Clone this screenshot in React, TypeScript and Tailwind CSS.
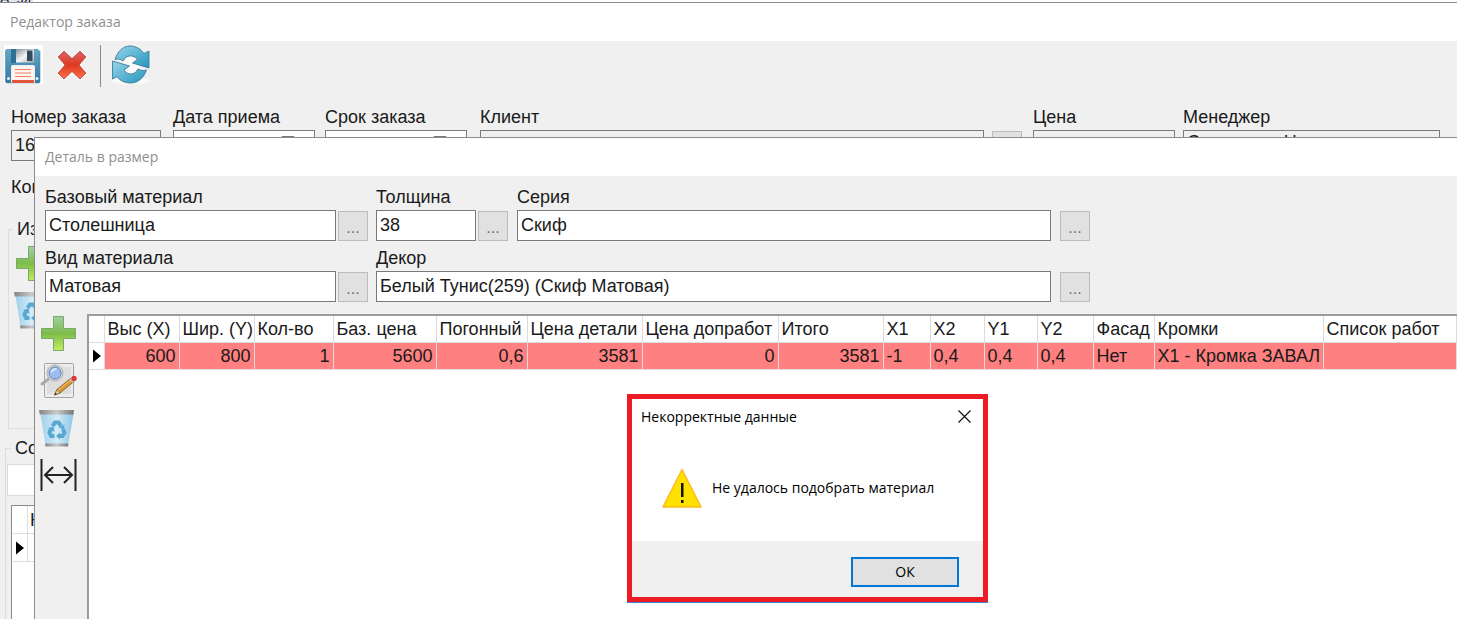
import type { ReactNode } from "react";

const columns = [
  { title: "Выс (X)", value: "600", width: "w-[75px]", right: true },
  { title: "Шир. (Y)", value: "800", width: "w-[75px]", right: true },
  { title: "Кол-во", value: "1", width: "w-[79px]", right: true },
  { title: "Баз. цена", value: "5600", width: "w-[103px]", right: true },
  { title: "Погонный", value: "0,6", width: "w-[91px]", right: true },
  { title: "Цена детали", value: "3581", width: "w-[115px]", right: true },
  { title: "Цена допработ", value: "0", width: "w-[136px]", right: true },
  { title: "Итого", value: "3581", width: "w-[105px]", right: true },
  { title: "X1", value: "-1", width: "w-[47px]", right: false },
  { title: "X2", value: "0,4", width: "w-[54px]", right: false },
  { title: "Y1", value: "0,4", width: "w-[53px]", right: false },
  { title: "Y2", value: "0,4", width: "w-[56px]", right: false },
  { title: "Фасад", value: "Нет", width: "w-[61px]", right: false },
  { title: "Кромки", value: "X1 - Кромка ЗАВАЛ", width: "w-[169px]", right: false },
  { title: "Список работ", value: "", width: "", right: false },
];

function SaveIcon() {
  return (
    <svg width="39" height="39" viewBox="0 0 39 39">
      <defs>
        <linearGradient id="saveBody" x1="0" y1="0" x2="0" y2="1">
          <stop offset="0" stopColor="#62a5c6" />
          <stop offset="1" stopColor="#36789f" />
        </linearGradient>
        <linearGradient id="saveShutter" x1="0" y1="0" x2="1" y2="1">
          <stop offset="0" stopColor="#8e959a" />
          <stop offset="0.5" stopColor="#f4f5f6" />
          <stop offset="1" stopColor="#a5abb0" />
        </linearGradient>
      </defs>
      <rect width="39" height="39" fill="#fff" />
      <path d="M1.500 6 q0-1.500 1.500-1.500 h31 l2 2 v30 q0 1.500-1.500 1.500 h-31.500 q-1.500 0-1.500-1.500z" fill="url(#saveBody)" stroke="#4b88aa" strokeWidth="0.600" />
      <rect x="7" y="4" width="5" height="14" fill="#2f6e95" />
      <rect x="12" y="4.500" width="18" height="13" fill="url(#saveShutter)" />
      <rect x="23" y="5.500" width="5.500" height="10.500" fill="#34495a" />
      <rect x="7.500" y="20.500" width="23" height="17.500" rx="1" fill="#fdf3ef" stroke="#e8eef2" />
      <rect x="8" y="35" width="22" height="3" fill="#e4553a" />
      <path d="M11 24.500 h16 M11 28 h16 M11 31.500 h16" stroke="#ee8064" strokeWidth="1.200" />
      <circle cx="4.500" cy="33.500" r="1.500" fill="#e6f2f8" />
      <circle cx="33" cy="33.500" r="1.500" fill="#e6f2f8" />
    </svg>
  );
}

function CrossIcon() {
  return (
    <svg width="34" height="34" viewBox="0 0 34 34">
      <defs>
        <linearGradient id="cross" x1="0" y1="0" x2="0" y2="1">
          <stop offset="0" stopColor="#d9656a" />
          <stop offset="0.500" stopColor="#e03a20" />
          <stop offset="1" stopColor="#ff7049" />
        </linearGradient>
      </defs>
      <path
        d="M9 3 L17 10.500 L25 3 L31 9 L24 17 L31 25 L25 31 L17 23.500 L9 31 L3 25 L10 17 L3 9z"
        fill="url(#cross)"
        stroke="#fff"
        strokeWidth="3"
        strokeLinejoin="round"
      />
      <path
        d="M9 3 L17 10.500 L25 3 L31 9 L24 17 L31 25 L25 31 L17 23.500 L9 31 L3 25 L10 17 L3 9z"
        fill="url(#cross)"
        stroke="#a8483c"
        strokeWidth="0.800"
        strokeLinejoin="round"
      />
    </svg>
  );
}

function RefreshIcon() {
  return (
    <svg width="40" height="40" viewBox="0 0 40 40">
      <defs>
        <linearGradient id="refresh" x1="0" y1="0" x2="1" y2="1">
          <stop offset="0" stopColor="#9ad6ea" />
          <stop offset="1" stopColor="#2294bd" />
        </linearGradient>
      </defs>
      <ellipse cx="20" cy="36" rx="19" ry="3.500" fill="#fafafa" />
      <circle cx="20" cy="19.500" r="9" fill="#fafafa" />
      <g fill="url(#refresh)" stroke="#3b7f98" strokeWidth="0.900" strokeLinejoin="round">
        <path d="M4 14.500 C7 5 13 1 19 1 C25 1 30 4 33 8.500 L38 6 V23 L21.500 18 L26.500 14.500 C22 9 15 10 12 16 C9.500 14 7 13.500 4 14.500z" />
        <path d="M1.500 16 L18.500 21 L13 25 C17 31 24 30 27 24 C29.500 25.500 32 26 35.500 25 C32 35 25 38 20 38 C14 38 9 36 6 31.500 L1.500 34z" />
      </g>
    </svg>
  );
}

function PlusIcon() {
  return (
    <svg width="38" height="37" viewBox="-1 0 38 37">
      <defs>
        <linearGradient id="plus" x1="0" y1="0" x2="0" y2="1">
          <stop offset="0" stopColor="#a3cfa4" />
          <stop offset="0.500" stopColor="#7cbc4a" />
          <stop offset="1" stopColor="#c3ee62" />
        </linearGradient>
      </defs>
      <path
        d="M13.500 1.500 h10 v12 h12 v10 h-12 v12 h-10 v-12 h-12 v-10 h12z"
        fill="url(#plus)"
        stroke="#7aa86a"
        strokeWidth="1"
      />
    </svg>
  );
}

function EditIcon() {
  return (
    <svg width="38" height="37" viewBox="-1 0 38 37">
      <rect x="4.500" y="1.500" width="29" height="34" rx="1" fill="#ececec" stroke="#a4a4a4" />
      <rect x="7" y="5" width="24" height="27" fill="#dedede" />
      <path d="M2 22 L8 17.500" stroke="#a9a9a9" strokeWidth="3" strokeLinecap="round" />
      <circle cx="15" cy="11" r="8" fill="#d5d5d5" stroke="#b0b0b0" />
      <circle cx="15" cy="11" r="6" fill="#9dbdec" stroke="#5f83c2" />
      <path d="M11.500 10.500 q1-3.500 5-3.500" stroke="#dbe8fb" strokeWidth="2" fill="none" />
      <path d="M14.500 33 L17 27.500 L31 16 L34 19.500 L20 31z" fill="#d9982f" stroke="#7b5a22" strokeWidth="0.800" />
      <path d="M18 28.500 L32 17" stroke="#f4c875" strokeWidth="1" />
      <path d="M14.500 33 L17 27.500 L20 31z" fill="#e8cfa0" stroke="#6d5020" strokeWidth="0.600" />
      <path d="M14.500 33 l1-2.200 l1.200 1.300z" fill="#222" />
      <path d="M29.500 17.300 L31.500 15.700 L34.500 19 L32.500 20.700z" fill="#c4c4c4" />
      <circle cx="34" cy="16.500" r="2.700" fill="#dd3b36" />
    </svg>
  );
}

function BinIcon() {
  return (
    <svg width="37" height="39" viewBox="0 0 37 39">
      <defs>
        <linearGradient id="bin" x1="0" y1="0" x2="1" y2="0">
          <stop offset="0" stopColor="#9fd0ea" />
          <stop offset="0.500" stopColor="#d3ecf8" />
          <stop offset="1" stopColor="#8dc5e4" />
        </linearGradient>
        <linearGradient id="binRim" x1="0" y1="0" x2="1" y2="0">
          <stop offset="0" stopColor="#858585" />
          <stop offset="0.500" stopColor="#c9c9c9" />
          <stop offset="1" stopColor="#777" />
        </linearGradient>
      </defs>
      <path d="M1.500 5 H34.500 L29 36 H6.500z" fill="url(#bin)" />
      <path d="M0 1 H35 L34.500 5.500 H0.800z" fill="url(#binRim)" />
      <path d="M6 34.500 H29.500 L29 37.500 H6.500z" fill="url(#binRim)" />
      <g fill="none" stroke="#5aa7d2" strokeWidth="4">
        <path d="M13.500 17 L16 13.500 H19.500 L22 17" />
        <path d="M24 20 L25.500 23.500 L23.500 27 H19.500" />
        <path d="M15.500 27 H12 L10.500 23.500 L12 20" />
      </g>
      <path d="M19.500 18.500 l6-3 l-0.500 5z M21 23.500 v7 l-4-3.500z M9 19 l5.500-1.500 l1 5.500z" fill="#5aa7d2" />
    </svg>
  );
}

function WidthIcon() {
  return (
    <svg width="38" height="34" viewBox="-1 0 38 34" fill="none" stroke="#222">
      <path d="M1.500 1 V33 M35.500 1 V33" strokeWidth="2" />
      <path d="M5 17 H32 M13 9 L5 17 L13 25 M24 9 L32 17 L24 25" strokeWidth="2" />
    </svg>
  );
}

function WarningIcon() {
  return (
    <svg width="40" height="40" viewBox="0 0 40 40" className="shrink-0">
      <path d="M20 1.500 L39 39 H1z" fill="#ffe100" stroke="#fdbb1e" strokeWidth="1.500" strokeLinejoin="round" />
      <rect x="19" y="15" width="2.500" height="14" fill="#111" />
      <rect x="19" y="32" width="2.500" height="3" fill="#111" />
    </svg>
  );
}

function Marker() {
  return (
    <svg width="8" height="14" viewBox="0 0 8 14">
      <path d="M0 0.500 L8 7 L0 13.500z" fill="#000" />
    </svg>
  );
}

function MoreButton({ label }: { label: string }) {
  return (
    <button
      type="button"
      aria-label={label}
      className="flex h-[30px] w-[30px] shrink-0 items-end justify-center border border-[#bcbcbc] bg-[#e1e1e1] text-base leading-6 text-[#707070]"
    >
      ...
    </button>
  );
}

type FieldProps = {
  id: string;
  label: string;
  value?: string;
  className: string;
  inputClass?: string;
  readOnly?: boolean;
  children?: ReactNode;
};

function Field({ id, label, value = "", className, inputClass = "", readOnly, children }: FieldProps) {
  return (
    <div className={`relative flex flex-col ${className}`}>
      <label htmlFor={id} className="h-7 whitespace-nowrap leading-[30px]">
        {label}
      </label>
      <input
        id={id}
        defaultValue={value}
        readOnly={readOnly}
        className={`h-[31px] w-full border border-[#7a7a7a] bg-white px-[3px] read-only:bg-[#f0f0f0] focus:outline-none ${inputClass}`}
      />
      {children}
    </div>
  );
}

function CalendarMark() {
  return (
    <svg width="14" height="14" viewBox="0 0 14 14" className="absolute right-5 bottom-3">
      <path d="M1 1.500 H13 V13 H1z" fill="none" stroke="#777" />
    </svg>
  );
}

function OrderWindow() {
  return (
    <section className="flex min-h-screen flex-col">
      <div className="flex h-[2px] items-end overflow-hidden bg-white text-sm leading-2">
        <span className="w-[33px] bg-[#dfe5ee]">А&nbsp; зя</span>
      </div>
      <header className="h-[39px] border-t border-[#8c8c8c] bg-white px-[10px] font-['Open_Sans',sans-serif] text-sm leading-[38px] text-[#8f8f8f]">
        Редактор заказа
      </header>

      <div className="flex items-start pt-1 pl-1">
        <button type="button" aria-label="Сохранить">
          <SaveIcon />
        </button>
        <button type="button" aria-label="Отменить" className="mt-[3px] ml-3">
          <CrossIcon />
        </button>
        <span className="ml-[11px] h-[42px] w-px bg-[#8a8a8a]" />
        <button type="button" aria-label="Обновить" className="ml-[10px]">
          <RefreshIcon />
        </button>
      </div>

      <div className="flex items-end pt-[15px] pr-[17px] pl-[11px]">
        <Field id="number" label="Номер заказа" value="1621" readOnly className="w-[150px]" />
        <Field id="accepted" label="Дата приема" className="ml-3 w-[142px]">
          <CalendarMark />
        </Field>
        <Field id="deadline" label="Срок заказа" className="ml-[10px] w-[142px]">
          <CalendarMark />
        </Field>
        <Field id="client" label="Клиент" readOnly className="ml-[13px] min-w-0 flex-1" />
        <div className="ml-2">
          <MoreButton label="Выбрать клиента" />
        </div>
        <Field id="price" label="Цена" readOnly className="ml-[11px] w-[142px]" />
        <Field
          id="manager"
          label="Менеджер"
          value="Соловьева Н"
          readOnly
          className="ml-2 w-[257px]"
          inputClass="pb-[6px]"
        />
      </div>

      <p className="ml-[11px] w-6 overflow-hidden pt-3 leading-7">Ком</p>

      <fieldset className="mt-4 ml-2 h-[212px] border border-[#dcdcdc] pl-1">
        <legend className="px-1 leading-6">Изделия</legend>
        <div className="flex flex-col items-start gap-[9px] pt-1 pl-px">
          <PlusIcon />
          <BinIcon />
        </div>
      </fieldset>

      <fieldset className="mt-[7px] ml-[5px] flex-1 border border-[#dcdcdc] pl-px">
        <legend className="ml-1 px-1 leading-6">Состав</legend>
        <div className="mt-1 h-8 border border-[#dcdcdc] bg-white" />
        <div className="mt-[9px] ml-1 h-[114px] border-t border-l border-[#8a8a8a] bg-white pl-px">
          <div className="flex h-7 border-b border-[#dcdcdc]">
            <span className="w-[15px] border-r border-[#dcdcdc]" />
            <span className="pl-[2px] leading-7">Наименование</span>
          </div>
          <div className="flex h-7 border-b border-[#dcdcdc]">
            <span className="flex w-[15px] items-center justify-center border-r border-[#dcdcdc]">
              <Marker />
            </span>
          </div>
        </div>
      </fieldset>
    </section>
  );
}

function DetailTable() {
  return (
    <div className="min-w-0 flex-1 overflow-hidden border-t-2 border-l-2 border-[#9c9c9c] bg-white">
      <table className="w-full table-fixed border-collapse leading-[26px]">
        <thead>
          <tr>
            <th className="w-[15px] border-r border-b border-[#dcdcdc] p-0" />
            {columns.map((col) => (
              <th
                key={col.title}
                className={`overflow-hidden border-r border-b border-[#dcdcdc] p-0 pl-[3px] text-left font-normal whitespace-nowrap ${col.width}`}
              >
                {col.title}
              </th>
            ))}
          </tr>
        </thead>
        <tbody>
          <tr>
            <td className="border-r border-b border-[#dcdcdc] p-0 pl-1">
              <Marker />
            </td>
            {columns.map((col) => (
              <td
                key={col.title}
                className={`overflow-hidden border-r border-b border-[#e4dcdc] bg-[#ff8080] p-0 px-[3px] whitespace-nowrap ${col.right ? "text-right" : "text-left"}`}
              >
                {col.value}
              </td>
            ))}
          </tr>
        </tbody>
      </table>
    </div>
  );
}

function DetailWindow() {
  return (
    <section className="absolute top-[137px] right-0 bottom-0 left-[34px] flex flex-col border-t border-l border-[#8c8c8c] bg-[#f0f0f0]">
      <header className="h-[38px] bg-white px-[10px] font-['Open_Sans',sans-serif] text-sm leading-[38px] text-[#8f8f8f]">
        Деталь в размер
      </header>

      <div className="flex w-full max-w-[1055px] flex-col gap-[2px] pt-[6px] pl-[10px]">
        <div className="flex items-end">
          <Field id="material" label="Базовый материал" value="Столешница" className="w-[291px]" />
          <div className="ml-[2px]">
            <MoreButton label="Выбрать материал" />
          </div>
          <Field id="thickness" label="Толщина" value="38" className="ml-2 w-[100px]" />
          <div className="ml-[2px]">
            <MoreButton label="Выбрать толщину" />
          </div>
          <Field id="series" label="Серия" value="Скиф" className="ml-[9px] min-w-0 flex-1" />
          <div className="ml-[9px]">
            <MoreButton label="Выбрать серию" />
          </div>
        </div>
        <div className="flex items-end">
          <Field id="kind" label="Вид материала" value="Матовая" className="w-[291px]" />
          <div className="ml-[2px]">
            <MoreButton label="Выбрать вид" />
          </div>
          <Field
            id="decor"
            label="Декор"
            value="Белый Тунис(259) (Скиф Матовая)"
            className="ml-2 min-w-0 flex-1"
          />
          <div className="ml-[9px]">
            <MoreButton label="Выбрать декор" />
          </div>
        </div>
      </div>

      <div className="flex flex-1 pt-3">
        <div className="flex w-[52px] flex-col items-start gap-[10px] pt-[1px] pl-1">
          <button type="button" aria-label="Добавить">
            <PlusIcon />
          </button>
          <button type="button" aria-label="Изменить">
            <EditIcon />
          </button>
          <button type="button" aria-label="Удалить">
            <BinIcon />
          </button>
          <button type="button" aria-label="Размер">
            <WidthIcon />
          </button>
        </div>
        <DetailTable />
      </div>
    </section>
  );
}

function ErrorDialog() {
  return (
    <div
      role="alertdialog"
      aria-labelledby="error-title"
      className="absolute top-[394px] left-[627px] w-[361px] border-5 border-[#ed1c24] bg-white font-['Open_Sans',sans-serif] text-sm text-black shadow-[0_1px_0_0_#2f86d6]"
    >
      <div className="flex h-[35px] items-center justify-between pr-3 pl-[9px]">
        <h2 id="error-title">Некорректные данные</h2>
        <button type="button" aria-label="Закрыть">
          <svg width="13" height="13" viewBox="0 0 13 13" stroke="#111" strokeWidth="1.200">
            <path d="M0.500 0.500 L12.500 12.500 M12.500 0.500 L0.500 12.500" />
          </svg>
        </button>
      </div>
      <div className="flex h-[107px] items-center gap-[10px] pl-[30px]">
        <WarningIcon />
        <p>Не удалось подобрать материал</p>
      </div>
      <div className="flex h-14 items-center justify-end bg-[#f0f0f0] pt-[6px] pr-6">
        <button type="button" className="h-[30px] w-[108px] border-2 border-[#0078d7] bg-[#e1e1e1]">
          ОК
        </button>
      </div>
    </div>
  );
}

export default function App() {
  return (
    <main className="relative h-screen overflow-hidden bg-[#f0f0f0] font-['Liberation_Sans',Arial,sans-serif] text-lg text-[#1a1a1a]">
      <OrderWindow />
      <DetailWindow />
      <ErrorDialog />
    </main>
  );
}
